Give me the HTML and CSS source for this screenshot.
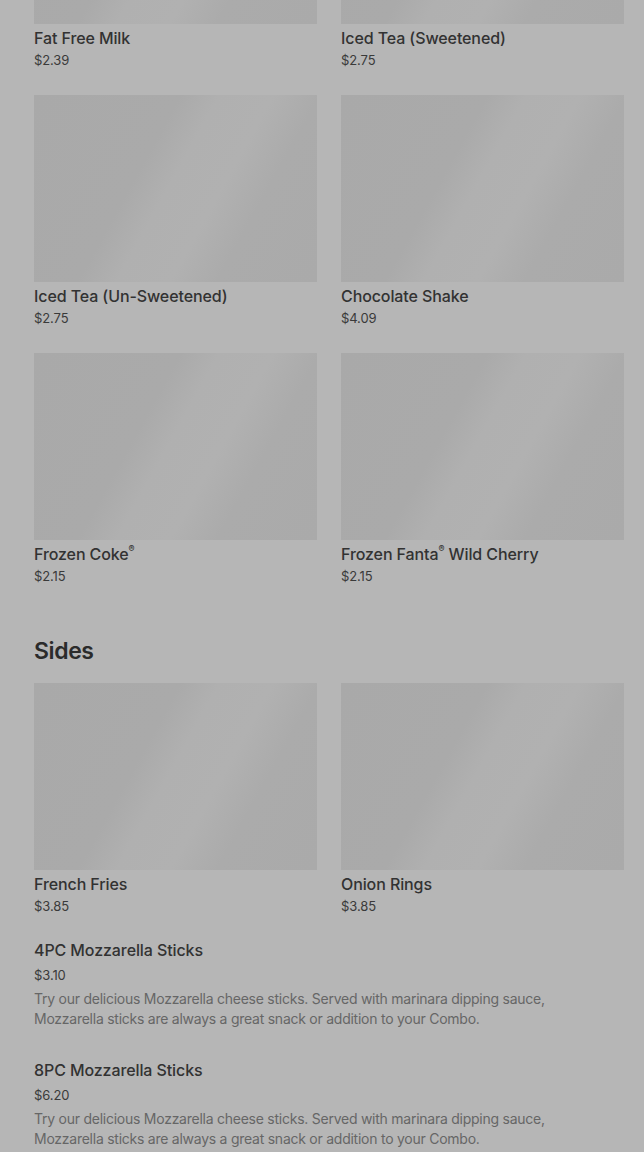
FILE: index.html
```html
<!DOCTYPE html>
<html lang="en">
<head>
  <meta charset="UTF-8">
  <meta name="viewport" content="width=device-width, initial-scale=1.0">
  <title>Menu</title>
  <link rel="stylesheet" href="styles.css">
</head>
<body>

  <div class="menu">
    <section class="menu-section drinks">
      <div class="item-grid">
        <div class="item-card">
          <div class="item-image"></div>
          <div class="item-name">Fat Free Milk</div>
          <div class="item-price">$2.39</div>
        </div>
        <div class="item-card">
          <div class="item-image"></div>
          <div class="item-name">Iced Tea (Sweetened)</div>
          <div class="item-price">$2.75</div>
        </div>
        <div class="item-card">
          <div class="item-image"></div>
          <div class="item-name">Iced Tea (Un-Sweetened)</div>
          <div class="item-price">$2.75</div>
        </div>
        <div class="item-card">
          <div class="item-image"></div>
          <div class="item-name">Chocolate Shake</div>
          <div class="item-price">$4.09</div>
        </div>
        <div class="item-card">
          <div class="item-image"></div>
          <div class="item-name">Frozen Coke<sup>®</sup></div>
          <div class="item-price">$2.15</div>
        </div>
        <div class="item-card">
          <div class="item-image"></div>
          <div class="item-name">Frozen Fanta<sup>®</sup> Wild Cherry</div>
          <div class="item-price">$2.15</div>
        </div>
      </div>
    </section>

    <section class="menu-section">
      <h2 class="section-title">Sides</h2>
      <div class="item-grid">
        <div class="item-card">
          <div class="item-image"></div>
          <div class="item-name">French Fries</div>
          <div class="item-price">$3.85</div>
        </div>
        <div class="item-card">
          <div class="item-image"></div>
          <div class="item-name">Onion Rings</div>
          <div class="item-price">$3.85</div>
        </div>
      </div>

      <div class="item-list">
        <div class="list-item">
          <div class="item-name">4PC Mozzarella Sticks</div>
          <div class="item-price">$3.10</div>
          <p class="item-desc">Try our delicious Mozzarella cheese sticks. Served with marinara dipping sauce, Mozzarella sticks are always a great snack or addition to your Combo.</p>
        </div>
        <div class="list-item">
          <div class="item-name">8PC Mozzarella Sticks</div>
          <div class="item-price">$6.20</div>
          <p class="item-desc">Try our delicious Mozzarella cheese sticks. Served with marinara dipping sauce, Mozzarella sticks are always a great snack or addition to your Combo.</p>
        </div>
      </div>
    </section>
  </div>

</body>
</html>
```

FILE: styles.css
```css
* { margin: 0; padding: 0; box-sizing: border-box; }
html, body { height: 100%; overflow: hidden; }
body { font-family: 'Inter', 'Noto Sans', sans-serif; background-color: #b6b6b6; color: #2f2f2f; }

.menu { padding: 0 20px 0 34px; margin-top: -163px; }

.menu-section + .menu-section { margin-top: 49px; }
.section-title { font-size: 23px; line-height: 32px; font-weight: 600; color: #2b2b2b; letter-spacing: -0.4px; margin-bottom: 16px; }

.item-grid { display: grid; grid-template-columns: 283px 283px; column-gap: 24px; row-gap: 25px; }
.item-image {
  height: 187px;
  background: linear-gradient(119deg, #a9a9a9 0%, #aaaaaa 38%, #b0b0b0 48%, #b1b1b1 62%, #ababab 74%, #aaaaaa 100%);
}
.item-name { font-size: 16px; line-height: 24px; font-weight: 500; color: #323232; margin-top: 2px; letter-spacing: -0.1px; }
.item-name sup { font-size: 9px; vertical-align: top; line-height: 14px; }
.item-price { font-size: 13px; line-height: 20px; color: #3a3a3a; letter-spacing: -0.1px; }

.item-list { margin-top: 22px; display: flex; flex-direction: column; gap: 29px; }
.list-item .item-name { margin-top: 0; }
.list-item .item-price { margin-top: 3px; }
.item-desc { font-size: 14px; line-height: 20px; color: #666666; margin-top: 4px; max-width: 540px; letter-spacing: -0.25px; }
```
